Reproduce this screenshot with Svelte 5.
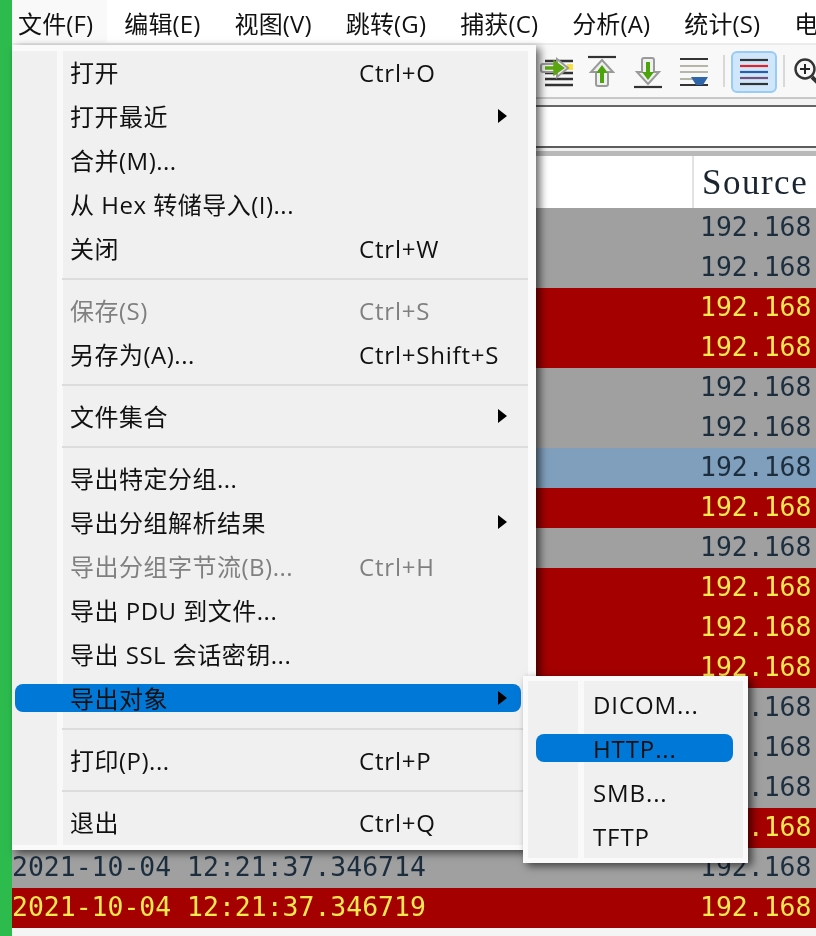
<script>
  const menubar = ['文件(F)', '编辑(E)', '视图(V)', '跳转(G)', '捕获(C)', '分析(A)', '统计(S)', '电话(y)'];

  const fileMenu = [
    [
      { label: '打开', key: 'Ctrl+O' },
      { label: '打开最近', arrow: true },
      { label: '合并(M)...' },
      { label: '从 Hex 转储导入(I)...' },
      { label: '关闭', key: 'Ctrl+W' }
    ],
    [
      { label: '保存(S)', key: 'Ctrl+S', disabled: true },
      { label: '另存为(A)...', key: 'Ctrl+Shift+S' }
    ],
    [{ label: '文件集合', arrow: true }],
    [
      { label: '导出特定分组...' },
      { label: '导出分组解析结果', arrow: true },
      { label: '导出分组字节流(B)...', key: 'Ctrl+H', disabled: true },
      { label: '导出 PDU 到文件...' },
      { label: '导出 SSL 会话密钥...' },
      { label: '导出对象', arrow: true, active: true }
    ],
    [{ label: '打印(P)...', key: 'Ctrl+P' }],
    [{ label: '退出', key: 'Ctrl+Q' }]
  ];

  const subMenu = [
    { label: 'DICOM...' },
    { label: 'HTTP...', active: true },
    { label: 'SMB...' },
    { label: 'TFTP' }
  ];

  const rows = [
    ['g'], ['g'], ['r'], ['r'], ['g'], ['g'], ['b'], ['r'], ['g'], ['r'], ['r'], ['r'],
    ['g'], ['g'], ['g'], ['r'],
    ['g', '2021-10-04 12:21:37.346714'],
    ['r', '2021-10-04 12:21:37.346719']
  ];
</script>

<div class="screen">
  <div class="stripe"></div>
  <div class="main">
    <nav class="menubar">
      {#each menubar as item, i}
        <div class="top-item" class:open={i === 0}>{item}</div>
      {/each}
    </nav>

    <div class="toolbar">
      <svg class="tool" viewBox="0 0 44 44" aria-hidden="true">
        <path d="M11 12h28M11 24h28M11 30h28M11 36h28" stroke="#333" stroke-width="2.4" fill="none" />
        <rect x="33" y="15" width="6" height="6" fill="#f5e04a" />
        <path d="M9 15h14v-5l11 9-11 9v-5H9a2 2 0 0 1-2-2v-4a2 2 0 0 1 2-2z" fill="#f0f0f0" stroke="#9a9a9a" stroke-width="2" />
        <path d="M11 19h14M21 14l7 5-7 5z" stroke="#5aa510" stroke-width="3.4" fill="#5aa510" />
      </svg>
      <svg class="tool" viewBox="0 0 44 44" aria-hidden="true">
        <g transform="translate(0 3)">
          <path d="M8 5h28" stroke="#333" stroke-width="2.2" />
          <path d="M22 8 33 20h-5v12a2 2 0 0 1-2 2h-8a2 2 0 0 1-2-2V20h-5z" fill="#f0f0f0" stroke="#9a9a9a" stroke-width="2" />
          <path d="M22 13l6 8h-4v10h-4V21h-4z" fill="#4da30c" />
        </g>
      </svg>
      <svg class="tool" viewBox="0 0 44 44" aria-hidden="true">
        <g transform="translate(0 2)">
          <path d="M8 36h28" stroke="#333" stroke-width="2.2" />
          <path d="M22 33 33 21h-5V9a2 2 0 0 0-2-2h-8a2 2 0 0 0-2 2v12h-5z" fill="#f0f0f0" stroke="#9a9a9a" stroke-width="2" />
          <path d="M22 29l6-8h-4V11h-4v10h-4z" fill="#4da30c" />
        </g>
      </svg>
      <svg class="tool" viewBox="0 0 44 44" aria-hidden="true">
        <g transform="translate(0 1)">
          <path d="M8 9h28M8 35h28" stroke="#333" stroke-width="2.2" />
          <path d="M8 16h28M8 22h28M8 29h16" stroke="#b5b5a8" stroke-width="2.2" />
          <path d="M19 27h17l-5 8h-7z" fill="#2f66aa" />
        </g>
      </svg>
      <span class="sep"></span>
      <div class="toggle">
        <svg viewBox="0 0 30 28" aria-hidden="true">
          <path d="M1 2h28" stroke="#333" stroke-width="2.2" />
          <path d="M1 8h28" stroke="#e0242a" stroke-width="2.2" />
          <path d="M1 14h28" stroke="#2b5ea8" stroke-width="2.2" />
          <path d="M1 20h28" stroke="#75507b" stroke-width="2.2" />
          <path d="M1 26h28" stroke="#333" stroke-width="2.2" />
        </svg>
      </div>
      <span class="sep"></span>
      <svg class="zoom" viewBox="0 0 30 34" aria-hidden="true">
        <circle cx="12" cy="13" r="9.5" fill="#f6f6f6" stroke="#333" stroke-width="2.4" />
        <path d="M12 8v10M7 13h10" stroke="#222" stroke-width="2" />
        <path d="M19 21l8 8" stroke="#333" stroke-width="4" />
      </svg>
    </div>

    <div class="rule-top"></div>
    <div class="filter"></div>
    <div class="rule-bottom"></div>

    <div class="list-head">
      <span class="head-source">Source</span>
    </div>

    <div class="rows">
      {#each rows as [kind, date]}
        <div class="row {kind}">
          <span class="date">{date ?? ''}</span>
          <span class="source">192.168</span>
        </div>
      {/each}
    </div>

    <div class="menu file-menu">
      {#each fileMenu as group, g}
        {#if g > 0}<div class="divider"></div>{/if}
        {#each group as item}
          <div class="entry" class:active={item.active} class:disabled={item.disabled}>
            <span class="label">{item.label}</span>
            {#if item.key}<span class="key">{item.key}</span>{/if}
            {#if item.arrow}<span class="arrow"></span>{/if}
          </div>
        {/each}
      {/each}
    </div>

    <div class="menu sub-menu">
      {#each subMenu as item}
        <div class="entry" class:active={item.active}>
          <span class="label">{item.label}</span>
        </div>
      {/each}
    </div>
  </div>
</div>

<style>
  :global(body) {
    margin: 0;
    background: #fff;
  }

  .screen {
    display: flex;
    width: 816px;
    height: 936px;
    overflow: hidden;
    filter: blur(0.45px);
    font-family: "Open Sans", "Noto Sans CJK SC", sans-serif;
    color: #111;
  }

  .stripe {
    flex: 0 0 12px;
    background: #2dbb4e;
  }

  .main {
    position: relative;
    flex: 1;
    min-width: 0;
    display: flex;
    flex-direction: column;
    background: #f4f4f4;
  }

  .menubar {
    flex: 0 0 45px;
    box-sizing: border-box;
    display: flex;
    background: #fff;
    border-bottom: 2px solid #ececec;
    white-space: nowrap;
  }

  .top-item {
    flex: none;
    padding: 0 17px;
    font-size: 24px;
    line-height: 47px;
    height: 43px;
    letter-spacing: 0.15px;
  }

  .top-item.open {
    padding: 0 14px 0 6px;
    background: #f9f9f9;
    border-radius: 0 0 4px 0;
  }

  .toolbar {
    flex: 0 0 52px;
    box-sizing: border-box;
    display: flex;
    align-items: center;
    gap: 2px;
    padding-left: 522px;
    background: #f8f8f8;
  }

  .tool {
    flex: 0 0 44px;
    width: 44px;
    height: 44px;
  }

  .sep {
    flex: 0 0 2px;
    height: 32px;
    margin: 0 5px;
    background: #d8d8d8;
  }

  .toggle {
    flex: 0 0 46px;
    box-sizing: border-box;
    height: 42px;
    display: flex;
    align-items: center;
    justify-content: center;
    background: #cfe6fb;
    border: 2px solid #98ccf8;
    border-radius: 6px;
    margin: 2px -1px 0;
  }

  .toggle svg {
    width: 30px;
    height: 28px;
  }

  .zoom {
    flex: 0 0 30px;
    width: 30px;
    height: 34px;
    margin: 0 0 -4px 1px;
  }

  .rule-top {
    flex: 0 0 10px;
    box-sizing: border-box;
    background: #f3f3f3;
    border-top: 2px solid #c8c8c8;
    border-bottom: 2px solid #666;
  }

  .filter {
    flex: 0 0 39px;
    background: #fff;
  }

  .rule-bottom {
    flex: 0 0 10px;
    box-sizing: border-box;
    background: linear-gradient(#f0f0f0 0 40%, #b9b9b9 40% 100%);
    border-top: 2px solid #5c5c5c;
  }

  .list-head {
    flex: 0 0 52px;
    box-sizing: border-box;
    padding-left: 680px;
    background: #fff;
  }

  .head-source {
    display: block;
    box-sizing: border-box;
    height: 52px;
    padding: 2px 0 0 8px;
    border-left: 2px solid #e2e2e2;
    font-family: "Liberation Serif", serif;
    font-size: 35px;
    letter-spacing: 1.5px;
    line-height: 50px;
    color: #1a2530;
  }

  .rows {
    display: flex;
    flex-direction: column;
  }

  .row {
    flex: 0 0 40px;
    height: 40px;
    display: flex;
    white-space: nowrap;
    font-family: "DejaVu Sans Mono", monospace;
    font-size: 26.45px;
    line-height: 38px;
  }

  .row.g { background: #a0a0a0; color: #1c2e3e; }
  .row.b { background: #7f9fbc; color: #1c2e3e; }
  .row.r { background: #a40000; color: #fce94f; }

  .date { flex: 0 0 688px; }

  .menu {
    position: absolute;
    box-sizing: border-box;
    background: #f0f0f0;
    border: 5px solid #fafafa;
    box-shadow: 4px 3px 8px rgba(0, 0, 0, 0.6);
    white-space: nowrap;
  }

  .file-menu {
    left: 0;
    top: 45px;
    width: 524px;
    height: 805px;
    border-width: 6px 8px 5px 0;
    border-right-color: #fbfbfb;
  }

  .file-menu::before,
  .sub-menu::before {
    content: "";
    position: absolute;
    top: 0;
    bottom: 0;
    width: 6px;
    background: #f9f9f9;
  }

  .file-menu::before { left: 45px; }

  .divider {
    position: relative;
    height: 18px;
  }

  .divider::after {
    content: "";
    position: absolute;
    left: 50px;
    right: 0;
    top: 7px;
    height: 2px;
    background: #dcdcdc;
  }

  .entry {
    position: relative;
    z-index: 0;
    display: flex;
    align-items: center;
    height: 44px;
    font-size: 24px;
    letter-spacing: 0.5px;
    line-height: 44px;
  }

  .file-menu .entry { padding-left: 58px; }

  .label { flex: 0 0 289px; }

  .key { flex: none; letter-spacing: 0.8px; }

  .arrow {
    position: absolute;
    left: 486px;
    top: 14px;
    width: 0;
    height: 0;
    border-left: 9px solid #000;
    border-top: 7px solid transparent;
    border-bottom: 7px solid transparent;
  }

  .disabled { color: #808080; }

  .entry.active::before {
    content: "";
    position: absolute;
    z-index: -1;
    top: 7px;
    height: 28px;
    background: #0078d7;
    border-radius: 8px;
  }

  .file-menu .entry.active::before { left: 3px; width: 506px; }

  .sub-menu {
    left: 511px;
    top: 676px;
    width: 225px;
    height: 187px;
    padding-top: 2px;
  }

  .sub-menu::before { left: 50px; }

  .sub-menu .entry { padding-left: 65px; letter-spacing: 0.9px; }

  .sub-menu .entry.active::before { left: 8px; width: 197px; }
</style>
